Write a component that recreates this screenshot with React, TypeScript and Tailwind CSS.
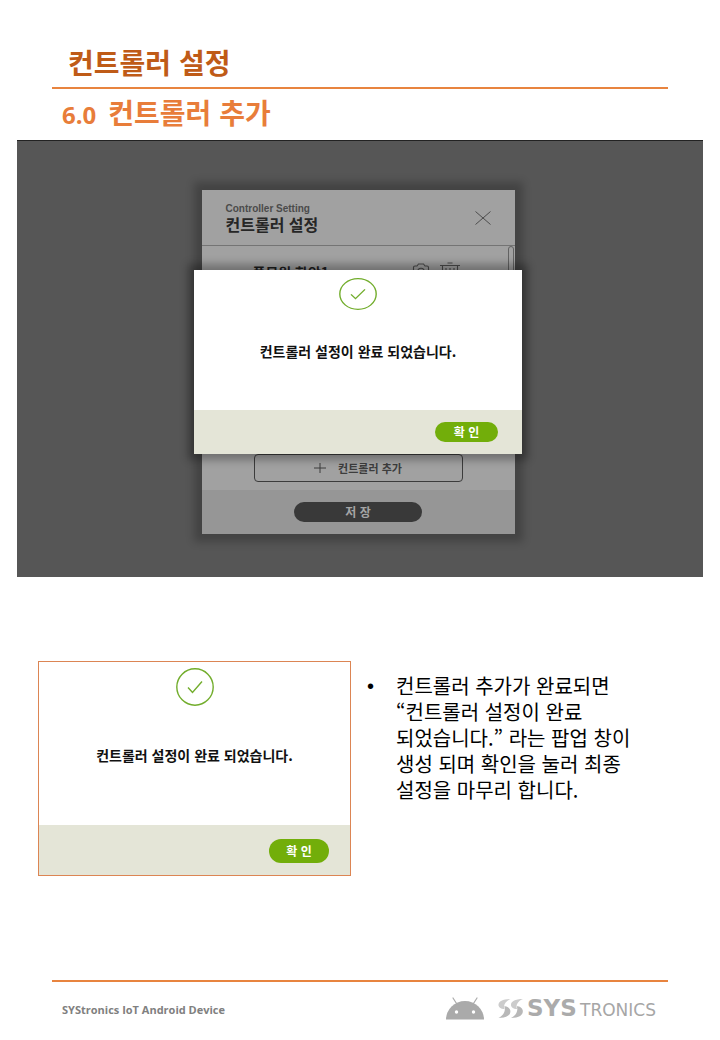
import React from "react";

function CheckMark({ className }: { className: string }) {
  return (
    <svg viewBox="0 0 38 38" preserveAspectRatio="none" className={className} fill="none" stroke="#72ad2c" aria-hidden="true">
      <ellipse cx="19" cy="19" rx="18.2" ry="18.2" strokeWidth="1.4" />
      <path d="M12 19.5 L16.5 24.5 L26 13.5" strokeWidth="1.4" />
    </svg>
  );
}

function CompleteMessage({ text }: { text: string }) {
  return <p className="text-center text-sm leading-5 font-bold text-[#111]">{text}</p>;
}

function ConfirmButton({ className }: { className: string }) {
  return (
    <button type="button" className={`rounded-full bg-[#72ae0a] text-center text-xs font-bold text-white ${className}`}>
      확 인
    </button>
  );
}

function ControllerPanel() {
  return (
    <div className="flex w-[313px] flex-col bg-[#a1a1a1] shadow-[0_0_8px_8px_rgba(0,0,0,0.22)]">
      <header className="flex h-14 items-center justify-between border-b border-[#747474] px-6">
        <div>
          <p className="font-['Liberation_Sans',sans-serif] text-[10px] leading-3 font-bold text-[#4b4b4b]">Controller Setting</p>
          <h3 className="text-base leading-[18px] font-bold text-[#262626]">컨트롤러 설정</h3>
        </div>
        <button type="button" aria-label="닫기">
          <svg viewBox="0 0 16 14" className="h-[14px] w-4" fill="none" stroke="#4d4d4d" strokeWidth="1" aria-hidden="true">
            <path d="M0.5 0.5 L15.5 13.5 M15.5 0.5 L0.5 13.5" />
          </svg>
        </button>
      </header>
      <div className="flex h-[244px] flex-col justify-between pb-2">
        <div className="flex justify-between pl-[51px]">
          <p className="pt-4 text-sm leading-5 font-bold text-[#1e1e1e]">풀무원 학암1</p>
          <div className="flex gap-12">
            <div className="flex gap-2.5 pt-4">
              <svg viewBox="0 0 18 18" className="h-[18px] w-[18px]" fill="none" stroke="#4b4b4b" strokeWidth="1.1" aria-hidden="true">
                <path d="M1.5 9 V5.5 Q1.5 4 3 4 H5 L6.5 2 H11.5 L13 4 H15 Q16.5 4 16.5 5.5 V14 Q16.5 16 15 16 H3 Q1.5 16 1.5 14 Z" />
                <circle cx="9" cy="9.5" r="3.2" />
              </svg>
              <svg viewBox="0 0 20 18" className="h-[18px] w-5" fill="none" stroke="#4b4b4b" strokeWidth="1.1" aria-hidden="true">
                <path d="M7.5 1 H12.5 M0 3.5 H20 M2.5 3.5 V17 H17.5 V3.5 M6 6 V13 M10 6 V13 M14 6 V13" />
              </svg>
            </div>
            <div className="mr-px h-[120px] w-1.5 rounded-sm border border-[#626262]" />
          </div>
        </div>
        <button
          type="button"
          className="mx-[52px] flex h-7 items-center justify-center gap-3 rounded border border-[#3c3c3c] text-[11px] leading-4 font-bold text-[#3d3d3d]"
        >
          <svg viewBox="0 0 12 12" className="h-3 w-3" stroke="#3d3d3d" strokeWidth="1" aria-hidden="true">
            <path d="M6 1 V11 M0 6 H12" />
          </svg>
          컨트롤러 추가
        </button>
      </div>
      <footer className="flex h-11 items-center justify-center bg-[#969696]">
        <button type="button" className="h-5 w-32 rounded-full bg-[#393939] text-xs leading-5 font-bold text-[#a5a5a5]">
          저 장
        </button>
      </footer>
    </div>
  );
}

function AndroidIcon() {
  return (
    <svg viewBox="0 0 38 23" className="h-[23px] w-[38px]" aria-hidden="true">
      <path d="M0 22.5 A19 18.5 0 0 1 38 22.5 Z" fill="#aaaaaa" />
      <path d="M7 1 L11.5 8 M31 1 L26.5 8" stroke="#aaaaaa" strokeWidth="1.2" strokeLinecap="round" />
      <circle cx="10.5" cy="15" r="1.7" fill="#fff" />
      <circle cx="27.5" cy="15" r="1.7" fill="#fff" />
    </svg>
  );
}

function SystronicsLogo() {
  return (
    <svg viewBox="0 0 162 24" className="h-6 w-[162px]" role="img" aria-label="SYSTRONICS">
      {[0, 12.5].map((x) => (
        <g key={x} transform={`translate(${x} 0)`}>
          <path d="M12.5 3 C4.5 3 0 5.5 0.5 9.5 C1 12 4 13.5 6.5 13 C5 9 7.5 5 12.5 3 Z" fill="#cccccc" />
          <path d="M0.5 22 C8.5 22 13 19 12.3 14.5 C11.8 12 9 10 6.3 10.3 C8 15 5.5 19.5 0.5 22 Z" fill="#b8b8b8" />
        </g>
      ))}
      <text x="29" y="20" fontFamily="DejaVu Sans, sans-serif" fontWeight="700" fontSize="23" fill="#ababab">
        SYS
      </text>
      <text x="82" y="20" fontFamily="DejaVu Sans, sans-serif" fontSize="17" fill="#a6a6a6">
        TRONICS
      </text>
    </svg>
  );
}

export default function App() {
  return (
    <main lang="ko" className="flex min-h-screen flex-col bg-white pt-[42px] font-['Noto_Sans_CJK_KR',sans-serif]">
      <header className="mx-[52px]">
        <h1 className="border-b-2 border-[#e8843f] pb-[5px] pl-4 text-[28px] leading-10 font-bold text-[#bf5b17]">컨트롤러 설정</h1>
        <h2 className="flex items-baseline gap-3 pb-1 pl-2.5 text-[28px] leading-[46px] font-bold text-[#e87d3a]">
          <span className="font-['Open_Sans',sans-serif] text-2xl">6.0</span>
          컨트롤러 추가
        </h2>
      </header>

      <section className="mx-[17px] mt-px border-t border-[#222] bg-[#565656] pt-[49px] pr-1 pb-[43px]">
        <div className="relative flex justify-center">
          <ControllerPanel />
          <div
            role="dialog"
            aria-label="컨트롤러 설정 완료"
            className="absolute top-20 left-1/2 flex h-[184px] w-[328px] -translate-x-1/2 flex-col bg-white shadow-[0_0_8px_6px_rgba(0,0,0,0.3)]"
          >
            <div className="flex flex-1 flex-col items-center gap-[31px] pt-2">
              <CheckMark className="h-8 w-[38px]" />
              <CompleteMessage text="컨트롤러 설정이 완료 되었습니다." />
            </div>
            <div className="flex h-11 items-center justify-end bg-[#e4e5d7] pr-6">
              <ConfirmButton className="h-5 w-[63px] leading-5" />
            </div>
          </div>
        </div>
      </section>

      <section className="mt-[84px] flex items-start gap-4 pr-[72px] pl-[38px]">
        <div className="flex h-[215px] w-[313px] shrink-0 flex-col border border-[#dc8553] bg-white">
          <div className="flex flex-1 flex-col items-center gap-[39px] pt-1.5">
            <CheckMark className="h-[38px] w-[38px]" />
            <CompleteMessage text="컨트롤러 설정이 완료 되었습니다." />
          </div>
          <div className="flex h-[50px] items-center justify-end bg-[#e4e5d7] pt-0.5 pr-[21px]">
            <ConfirmButton className="h-6 w-[60px] leading-6" />
          </div>
        </div>
        <ul className="pt-3 text-xl leading-[26px] text-black">
          <li className="flex gap-[22px]">
            <span className="font-['Liberation_Sans',sans-serif]" aria-hidden="true">•</span>
            <span>
              컨트롤러 추가가 완료되면
              <br />
              “컨트롤러 설정이 완료
              <br />
              되었습니다.” 라는 팝업 창이
              <br />
              생성 되며 확인을 눌러 최종
              <br />
              설정을 마무리 합니다.
            </span>
          </li>
        </ul>
      </section>

      <footer className="mx-[52px] mt-auto mb-5 flex items-center justify-between border-t-2 border-[#e8843f] pt-3.5 pr-2 pl-2.5">
        <p className="pt-1 font-['Open_Sans',sans-serif] text-[11px] leading-5 font-bold text-[#808080]">SYStronics IoT Android Device</p>
        <div className="flex items-center gap-3.5">
          <AndroidIcon />
          <SystronicsLogo />
        </div>
      </footer>
    </main>
  );
}
